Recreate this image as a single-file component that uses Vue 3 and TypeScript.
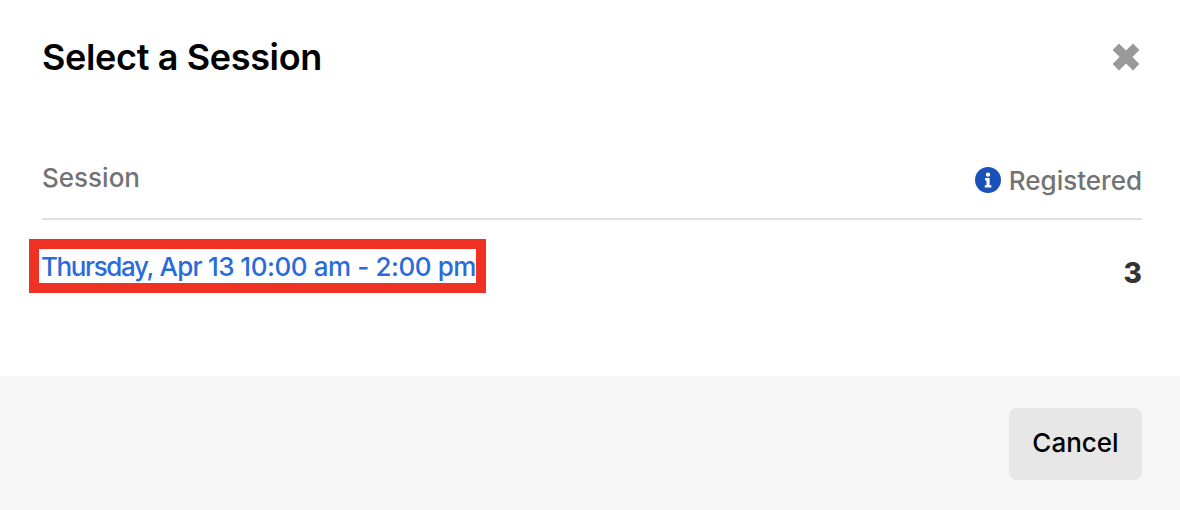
<script setup lang="ts">
const title = 'Select a Session'
const day = 'Thursday,'
const date = 'Apr 13'
const time = '10:00 am - 2:00 pm'
</script>

<template>
  <div class="modal">
    <header class="head">
      <h1 class="title">{{ title }}</h1>
      <svg class="close" viewBox="0 0 28 28" aria-hidden="true">
        <path d="M7 .6 L14 7.6 L21 .6 L27.4 7 L20.4 14 L27.4 21 L21 27.4 L14 20.4 L7 27.4 L.6 21 L7.6 14 L.6 7 Z" />
      </svg>
    </header>
    <section class="table">
      <div class="thead">
        <span class="th-session">Session</span>
        <span class="th-reg">
          <svg class="info" viewBox="0 0 26 26" aria-hidden="true">
            <circle cx="13" cy="13" r="13" fill="#1a51b8" />
            <circle cx="13" cy="7.6" r="2.2" fill="#fff" />
            <path d="M10 11h4.6v7.2H16.4v2.4H9.8v-2.4h1.7v-4.8H10z" fill="#fff" />
          </svg>
          Registered
        </span>
      </div>
      <div class="row">
        <a class="link"><span class="day">{{ day }}</span> <span class="date">{{ date }}</span> {{ time }}</a>
        <span class="count">3</span>
      </div>
    </section>
    <footer class="foot">
      <button class="cancel" type="button">Cancel</button>
    </footer>
  </div>
</template>

<style>
html, body { margin: 0; background: #fff; }
</style>

<style scoped>
.modal {
  width: 1180px;
  height: 510px;
  display: flex;
  flex-direction: column;
  font-family: Inter, "Liberation Sans", sans-serif;
  background: #fff;
  overflow: hidden;
}
.head {
  height: 116px;
  box-sizing: border-box;
  padding: 36px 40px 0 42px;
  display: flex;
  justify-content: space-between;
  align-items: flex-start;
}
.title {
  margin: 0;
  font-size: 36px;
  line-height: 42px;
  font-weight: 600;
  letter-spacing: -0.35px;
  color: #000;
}
.close {
  width: 28px;
  height: 28px;
  margin-top: 7px;
  fill: #999;
}
.table {
  flex: 1;
  padding: 0 38px 0 42px;
}
.thead {
  height: 104px;
  box-sizing: border-box;
  display: flex;
  justify-content: space-between;
  border-bottom: 2px solid #e0e0e0;
  color: #737373;
  font-size: 26px;
  font-weight: 500;
  padding-top: 44px;
}
.th-session { line-height: 36px; }
.th-reg {
  display: flex;
  align-items: center;
  gap: 8px;
  height: 32px;
  margin-top: 4px;
}
.info { width: 26px; height: 26px; }
.row {
  display: flex;
  justify-content: space-between;
  align-items: flex-start;
  padding-top: 19px;
}
.link {
  margin-left: -13px;
  border: 10px solid #f03224;
  padding: 0 0 0 2px;
  width: 435px;
  height: 34px;
  line-height: 35px;
  font-size: 26px;
  font-weight: 450;
  letter-spacing: -0.42px;
  color: #2a6bdc;
  white-space: nowrap;
}
.day { letter-spacing: -1.4px; }
.date { letter-spacing: -0.7px; }
.count {
  font-size: 28px;
  font-weight: 800;
  color: #333;
  line-height: 34px;
  margin-top: 17px;
}
.foot {
  height: 134px;
  box-sizing: border-box;
  background: #f7f7f7;
  padding: 32px 38px 0;
  display: flex;
  justify-content: flex-end;
  align-items: flex-start;
}
.cancel {
  width: 133px;
  height: 72px;
  border: 0;
  border-radius: 8px;
  background: #e7e7e7;
  color: #000;
  padding: 0 0 3px;
  font: 500 26px Inter, "Liberation Sans", sans-serif;
}
</style>
